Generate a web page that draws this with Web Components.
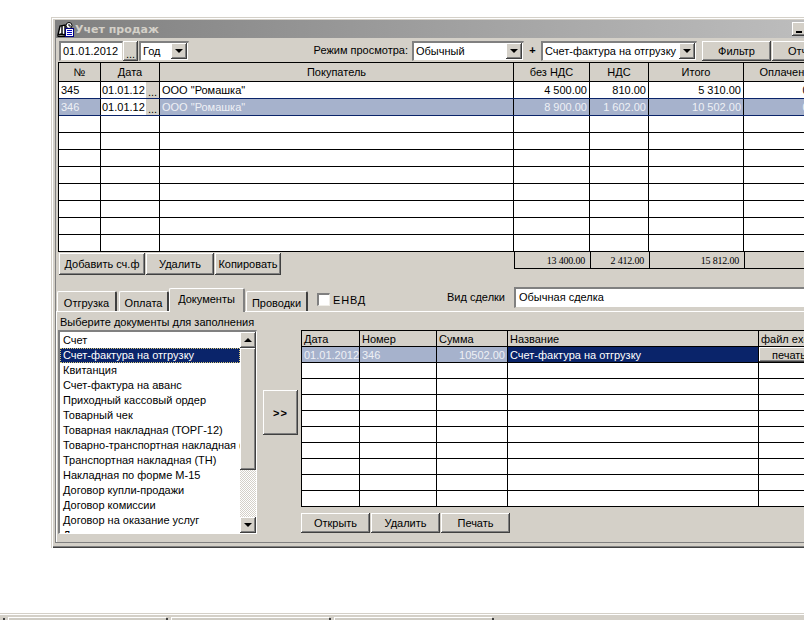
<!DOCTYPE html>
<html lang="ru">
<head>
<meta charset="utf-8">
<title>Учет продаж</title>
<style>
html, body { margin: 0; height: 620px; overflow: hidden; background: #fff; }
</style>
</head>
<body>
<sales-app></sales-app>
<script>
class XButton extends HTMLElement {
    constructor() {
        super();
        this.attachShadow({ mode: 'open' });
        this.shadowRoot.innerHTML = `
        <style>
        :host {
          display: flex;
          align-items: center;
          justify-content: center;
          box-sizing: border-box;
          flex: none;
          background: #d4d0c8;
          color: #000;
          white-space: nowrap;
          box-shadow: inset -1px -1px #404040, inset 1px 1px #fff, inset -2px -2px #808080;
          cursor: default;
        }
        </style>
        <slot></slot>
        `;
    }
}
customElements.define('x-button', XButton);

class XArrow extends HTMLElement {
    constructor() {
        super();
        this.attachShadow({ mode: 'open' });
        this.shadowRoot.innerHTML = `
        <style>
        :host {
          display: flex;
          align-items: center;
          justify-content: center;
          flex: none;
          box-sizing: border-box;
          width: 16px;
          background: #d4d0c8;
          box-shadow: inset -1px -1px #404040, inset 1px 1px #fff, inset -2px -2px #808080;
        }
        i {
          width: 0;
          height: 0;
          border-left: 4px solid transparent;
          border-right: 4px solid transparent;
          border-top: 4px solid #000;
        }
        :host([up]) i {
          border-top: 0;
          border-bottom: 4px solid #000;
        }
        </style>
        <i></i>
        `;
    }
}
customElements.define('x-arrow', XArrow);

class XField extends HTMLElement {
    constructor() {
        super();
        this.attachShadow({ mode: 'open' });
        this.shadowRoot.innerHTML = `
        <style>
        :host {
          display: flex;
          flex: none;
          box-sizing: border-box;
          height: 20px;
          background: #fff;
          color: #000;
          border-top: 2px solid #808080;
          border-left: 2px solid #808080;
          border-right: 1px solid #d4d0c8;
          border-bottom: 1px solid #d4d0c8;
          white-space: nowrap;
          overflow: hidden;
        }
        .text {
          flex: 1;
          min-width: 0;
          padding-left: 2px;
          line-height: 17px;
          overflow: hidden;
        }
        ::slotted(x-arrow) { margin: 0 1px 1px 0; }
        </style>
        <div class="text"><slot></slot></div>
        <slot name="end"></slot>
        `;
    }
}
customElements.define('x-field', XField);

class DataGrid extends HTMLElement {
    constructor() {
        super();
        this.attachShadow({ mode: 'open' });
        this.shadowRoot.innerHTML = `
        <style>
        :host {
          display: block;
          flex: none;
          border-top: 1px solid #000;
          border-left: 1px solid #000;
          background: #fff;
          color: #000;
          white-space: nowrap;
        }
        .row {
          display: flex;
          box-sizing: border-box;
          border-bottom: 1px solid #000;
        }
        .row.line { border-bottom-color: #0a246a; }
        .row.head { background: #d4d0c8; }
        .row.sel { background: #a6b2cc; color: #eef0f5; }
        .cell {
          flex: none;
          box-sizing: border-box;
          border-right: 1px solid #000;
          padding: 0 2px;
          overflow: hidden;
          display: flex;
          align-items: center;
        }
        .r { justify-content: flex-end; }
        .c { justify-content: center; }
        .navy { background: #0a246a; color: #fff; }
        .date { background: #fff; color: #000; padding: 0 0 0 1px; justify-content: space-between; }
        .dots {
          width: 13px;
          align-self: stretch;
          background: #d4d0c8;
          display: flex;
          align-items: flex-end;
          justify-content: center;
          line-height: 11px;
          flex: none;
        }
        .btn { padding: 0; align-items: stretch; }
        .btn x-button { flex: 1; justify-content: flex-start; padding-left: 13px; }
        </style>
        <div id="body"></div>
        `;
    }

    setData(columns, head, rows, headAlign) {
        const body = this.shadowRoot.getElementById('body');
        const rowHeight = this.getAttribute('row-height');
        const headHeight = this.getAttribute('head-height');
        const addRow = (cells, cls, height) => {
            const row = document.createElement('div');
            row.className = 'row ' + cls;
            row.style.height = height + 'px';
            columns.forEach((width, i) => {
                const data = cells[i] || {};
                const cell = document.createElement('div');
                cell.className = 'cell ' + (data.cls || '');
                cell.style.width = width + 'px';
                if (data.cls === 'date') {
                    cell.innerHTML = `<span>${data.text}</span><span class="dots">...</span>`;
                } else if (data.cls === 'btn') {
                    cell.innerHTML = `<x-button>${data.text}</x-button>`;
                } else {
                    cell.textContent = data.text || '';
                }
                row.appendChild(cell);
            });
            body.appendChild(row);
        };
        addRow(head.map(text => ({ text, cls: headAlign })), 'head', headHeight);
        rows.forEach(r => addRow(r.cells || [], r.cls || '', rowHeight));
    }
}
customElements.define('data-grid', DataGrid);

class TabItem extends HTMLElement {
    constructor() {
        super();
        this.attachShadow({ mode: 'open' });
        this.shadowRoot.innerHTML = `
        <style>
        :host {
          display: flex;
          align-items: center;
          justify-content: center;
          flex: none;
          box-sizing: border-box;
          height: 20px;
          padding-top: 2px;
          background: #d4d0c8;
          color: #000;
          border-top: 1px solid #fff;
          border-left: 1px solid #fff;
          border-right: 2px solid #404040;
          border-top-left-radius: 2px;
          border-top-right-radius: 2px;
          white-space: nowrap;
        }
        :host([active]) {
          height: 24px;
          margin-bottom: -1px;
          padding: 0 0 3px;
          border-right-color: #808080;
          position: relative;
        }
        </style>
        <slot></slot>
        `;
    }
}
customElements.define('tab-item', TabItem);

class DocList extends HTMLElement {
    constructor() {
        super();
        this.attachShadow({ mode: 'open' });
        this.shadowRoot.innerHTML = `
        <style>
        :host {
          display: flex;
          flex: none;
          box-sizing: border-box;
          width: 199px;
          height: 204px;
          background: #fff;
          color: #000;
          border-top: 2px solid #808080;
          border-left: 2px solid #808080;
          border-right: 1px solid #fff;
          border-bottom: 1px solid #fff;
          box-shadow: 1px 1px #d4d0c8;
        }
        ul {
          flex: 1;
          min-width: 0;
          margin: 0;
          padding: 1px 0 0;
          list-style: none;
          overflow: hidden;
          white-space: nowrap;
        }
        li {
          height: 15px;
          line-height: 15px;
          padding-left: 3px;
          overflow: hidden;
        }
        li.sel {
          box-sizing: border-box;
          background: #0a246a;
          color: #fff;
          outline: 1px dotted #d8c878;
          outline-offset: -1px;
        }
        .bar {
          width: 16px;
          flex: none;
          display: flex;
          flex-direction: column;
          background-image: conic-gradient(#fff 25%, #d4d0c8 0 50%, #fff 0 75%, #d4d0c8 0);
          background-size: 2px 2px;
        }
        .bar x-arrow { height: 16px; }
        .thumb {
          height: 122px;
          box-sizing: border-box;
          background: #d4d0c8;
          box-shadow: inset -1px -1px #404040, inset 1px 1px #fff, inset -2px -2px #808080;
        }
        .track { flex: 1; }
        </style>
        <ul id="items"></ul>
        <div class="bar">
          <x-arrow up></x-arrow>
          <div class="thumb"></div>
          <div class="track"></div>
          <x-arrow></x-arrow>
        </div>
        `;
    }

    setItems(items, selected) {
        const list = this.shadowRoot.getElementById('items');
        items.forEach((text, i) => {
            const li = document.createElement('li');
            li.textContent = text;
            if (i === selected) li.className = 'sel';
            list.appendChild(li);
        });
    }
}
customElements.define('doc-list', DocList);

class AppWindow extends HTMLElement {
    constructor() {
        super();
        this.attachShadow({ mode: 'open' });
        this.shadowRoot.innerHTML = `
        <style>
        :host {
          display: block;
          flex: none;
          box-sizing: border-box;
          width: 796px;
          height: 531px;
          margin: 17px 0 0 51px;
          padding: 3px 4px 5px;
          background: #d4d0c8;
          box-shadow: inset 1px 1px #d4d0c8, inset 2px 2px #fff, inset -1px -1px #404040, inset -2px -2px #808080;
        }
        .wrap {
          height: 100%;
          display: flex;
          flex-direction: column;
        }
        .title {
          flex: none;
          height: 18px;
          display: flex;
          align-items: center;
          padding-left: 2px;
          background: linear-gradient(90deg, #808080, #c0c0c0);
          color: #d4d0c8;
          font: bold 11px "DejaVu Sans", sans-serif;
        }
        .title svg { flex: none; }
        .caption { flex: 1; }
        .tbtn {
          flex: none;
          box-sizing: border-box;
          width: 16px;
          height: 14px;
          display: flex;
          align-items: flex-end;
          padding: 0 0 3px 4px;
          background: #d4d0c8;
          box-shadow: inset -1px -1px #404040, inset 1px 1px #fff, inset -2px -2px #808080;
        }
        .tbtn i { width: 6px; height: 2px; background: #000; }
        .tbtn.last { margin: 0 1px 0 2px; }
        .client {
          flex: 1;
          min-height: 0;
          border-left: 1px solid #808080;
          border-bottom: 1px solid #808080;
        }
        </style>
        <div class="wrap">
          <div class="title">
            <svg width="18" height="15" viewBox="0 0 18 15">
              <path d="M1 13 L3 4 L8 3 V13 L4 12 Z" fill="#fff" stroke="#000" stroke-width="1.400"/>
              <path d="M5 4 V12" stroke="#000" stroke-width="1.400"/>
              <path d="M0.500 14.500 H8" stroke="#000"/>
              <circle cx="12" cy="3.500" r="3" fill="#fff" stroke="#000"/>
              <path d="M12 2 V4 H14" stroke="#000" fill="none"/>
              <rect x="8.500" y="6.500" width="8" height="8" fill="#fff" stroke="#000080"/>
              <path d="M10 8.500 H15 M10 10.500 H15 M10 12.500 H15" stroke="#0000c0"/>
            </svg>
            <span class="caption"><slot name="caption"></slot></span>
            <div class="tbtn"><i></i></div>
            <div class="tbtn"></div>
            <div class="tbtn last"></div>
          </div>
          <div class="client"><slot></slot></div>
        </div>
        `;
    }
}
customElements.define('app-window', AppWindow);

class StatusBar extends HTMLElement {
    constructor() {
        super();
        this.attachShadow({ mode: 'open' });
        this.shadowRoot.innerHTML = `
        <style>
        :host {
          display: flex;
          flex: none;
          box-sizing: border-box;
          height: 7px;
          margin-top: auto;
          padding: 3px 0 0 3px;
          background: #d4d0c8;
          border-top: 1px solid #d4d0c8;
          box-shadow: inset 0 1px #fff;
        }
        .grip { width: 2px; flex: none; background: #404040; margin-top: 1px; }
        .panel {
          width: 158px;
          flex: none;
          margin: 0 0 0 3px;
          background: #cfccc4;
          border-top: 1px solid #fff;
          border-left: 1px solid #fff;
          box-sizing: border-box;
        }
        .panel + .grip { margin-left: 0; }
        </style>
        <div class="grip"></div><div class="panel"></div>
        <div class="grip"></div><div class="panel"></div>
        <div class="grip"></div><div class="panel"></div>
        <div class="grip"></div>
        `;
    }
}
customElements.define('status-bar', StatusBar);

class SalesApp extends HTMLElement {
    constructor() {
        super();
        this.attachShadow({ mode: 'open' });
        this.shadowRoot.innerHTML = `
        <style>
        :host {
          display: flex;
          flex-direction: column;
          height: 620px;
          overflow: hidden;
          font: 11px "Liberation Sans", Arial, sans-serif;
          color: #000;
        }
        .toolbar {
          display: flex;
          align-items: flex-start;
          height: 20px;
          padding: 3px 0 0 3px;
        }
        .toolbar .lbl { width: 219px; flex: none; text-align: right; line-height: 18px; }
        .plus { width: 17px; flex: none; text-align: center; line-height: 19px; font-weight: bold; }
        #grid1 { margin: 1px 0 0 2px; }
        .under {
          display: flex;
          align-items: flex-start;
          height: 24px;
          padding-left: 3px;
        }
        .under .btns { display: flex; gap: 1px; padding-top: 1px; width: 455px; flex: none; box-sizing: border-box; }
        .under x-button { height: 22px; }
        .sum {
          display: flex;
          height: 16px;
          border-left: 1px solid #000;
          border-bottom: 1px solid #000;
          font: 10px "Liberation Serif", serif;
          letter-spacing: -0.2px;
        }
        .sum div {
          box-sizing: border-box;
          padding-right: 5px;
          border-right: 1px solid #000;
          text-align: right;
          line-height: 17px;
        }
        .tabs {
          display: flex;
          align-items: flex-end;
          height: 25px;
          margin-top: 11px;
          padding-left: 1px;
          border-bottom: 1px solid #fff;
          box-sizing: border-box;
        }
        .check {
          box-sizing: border-box;
          width: 13px;
          height: 13px;
          flex: none;
          margin: 0 3px 5px 9px;
          background: #fff;
          border-top: 2px solid #808080;
          border-left: 2px solid #808080;
          border-right: 1px solid #f0eee8;
          border-bottom: 1px solid #f0eee8;
        }
        .envd { width: 114px; flex: none; letter-spacing: 0.8px; margin-bottom: 4px; line-height: 14px; }
        .deal { width: 67px; flex: none; margin-bottom: 7px; line-height: 14px; }
        .tabs x-field { width: 340px; height: 21px; margin-bottom: 3px; }
        .tabs x-field { padding-left: 1px; }
        .page {
          display: flex;
          align-items: flex-start;
          height: 230px;
          border-left: 1px solid #fff;
          box-sizing: border-box;
        }
        .left { margin-left: 1px; flex: none; width: 199px; }
        .hint { height: 18px; padding: 3px 0 0 2px; box-sizing: border-box; line-height: 14px; white-space: nowrap; }
        .go { width: 35px; height: 45px; margin: 78px 3px 0 6px; font-weight: bold; letter-spacing: 1px; }
        .right { flex: none; margin-top: 18px; }
        .right .btns { display: flex; gap: 1px; margin-top: 6px; }
        .right x-button { width: 69px; height: 20px; }
        </style>
        <app-window>
          <span slot="caption">Учет продаж</span>
          <div class="toolbar">
            <x-field style="width:64px">01.01.2012</x-field>
            <x-button style="width:15px;height:20px;align-items:flex-end;line-height:13px">...</x-button>
            <x-field style="width:50px;margin-left:1px">Год<x-arrow slot="end"></x-arrow></x-field>
            <div class="lbl">Режим просмотра:</div>
            <x-field style="width:112px;margin-left:4px">Обычный<x-arrow slot="end"></x-arrow></x-field>
            <div class="plus">+</div>
            <x-field style="width:156px">Счет-фактура на отгрузку<x-arrow slot="end"></x-arrow></x-field>
            <x-button style="width:69px;height:20px;margin-left:5px">Фильтр</x-button>
            <x-button style="width:62px;height:20px;margin-left:1px">Отчет</x-button>
          </div>
          <data-grid id="grid1" row-height="17" head-height="19"></data-grid>
          <div class="under">
            <div class="btns">
              <x-button style="width:86px">Добавить сч.ф</x-button>
              <x-button style="width:68px">Удалить</x-button>
              <x-button style="width:66px">Копировать</x-button>
            </div>
            <div class="sum">
              <div style="width:76px">13 400.00</div>
              <div style="width:59px">2 412.00</div>
              <div style="width:95px">15 812.00</div>
              <div style="width:83px"></div>
            </div>
          </div>
          <div class="tabs">
            <tab-item style="width:60px">Отгрузка</tab-item>
            <tab-item style="width:50px;margin-left:2px">Оплата</tab-item>
            <tab-item active style="width:76px">Документы</tab-item>
            <tab-item style="width:62px;margin-left:1px">Проводки</tab-item>
            <div class="check"></div>
            <div class="envd">ЕНВД</div>
            <div class="deal">Вид сделки</div>
            <x-field>Обычная сделка</x-field>
          </div>
          <div class="page">
            <div class="left">
              <div class="hint">Выберите документы для заполнения</div>
              <doc-list id="docs"></doc-list>
            </div>
            <x-button class="go">&gt;&gt;</x-button>
            <div class="right">
              <data-grid id="grid2" row-height="16" head-height="16"></data-grid>
              <div class="btns">
                <x-button>Открыть</x-button>
                <x-button>Удалить</x-button>
                <x-button>Печать</x-button>
              </div>
            </div>
          </div>
        </app-window>
        <status-bar></status-bar>
        `;
    }

    connectedCallback() {
        this._init();
    }

    _init() {
        // SALES GRID
        const root = this.shadowRoot;
        const blank = { cells: [] };
        root.getElementById('grid1').setData(
            [42, 59, 354, 76, 59, 95, 83],
            ['№', 'Дата', 'Покупатель', 'без НДС', 'НДС', 'Итого', 'Оплачено'],
            [
                { cls: 'line', cells: [{ text: '345' }, { text: '01.01.12', cls: 'date' }, { text: 'ООО "Ромашка"' }, { text: '4 500.00', cls: 'r' }, { text: '810.00', cls: 'r' }, { text: '5 310.00', cls: 'r' }, { text: '0.00', cls: 'r' }] },
                { cls: 'sel line', cells: [{ text: '346' }, { text: '01.01.12', cls: 'date' }, { text: 'ООО "Ромашка"' }, { text: '8 900.00', cls: 'r' }, { text: '1 602.00', cls: 'r' }, { text: '10 502.00', cls: 'r' }, { text: '0.00', cls: 'r' }] },
                blank, blank, blank, blank, blank, blank, blank, blank
            ],
            'c'
        );

        // DOCUMENTS GRID
        root.getElementById('grid2').setData(
            [58, 77, 71, 251, 100],
            ['Дата', 'Номер', 'Сумма', 'Название', 'файл excel'],
            [
                { cls: 'sel', cells: [{ text: '01.01.2012' }, { text: '346' }, { text: '10502.00', cls: 'r' }, { text: 'Счет-фактура на отгрузку', cls: 'navy' }, { text: 'печать', cls: 'btn' }] },
                blank, blank, blank, blank, blank, blank, blank, blank, blank
            ],
            ''
        );

        // DOCUMENT TYPES
        root.getElementById('docs').setItems([
            'Счет',
            'Счет-фактура на отгрузку',
            'Квитанция',
            'Счет-фактура на аванс',
            'Приходный кассовый ордер',
            'Товарный чек',
            'Товарная накладная (ТОРГ-12)',
            'Товарно-транспортная накладная (',
            'Транспортная накладная (ТН)',
            'Накладная по форме М-15',
            'Договор купли-продажи',
            'Договор комиссии',
            'Договор на оказание услуг',
            'Договор'
        ], 1);
    }
}
customElements.define('sales-app', SalesApp);
</script>
</body>
</html>
